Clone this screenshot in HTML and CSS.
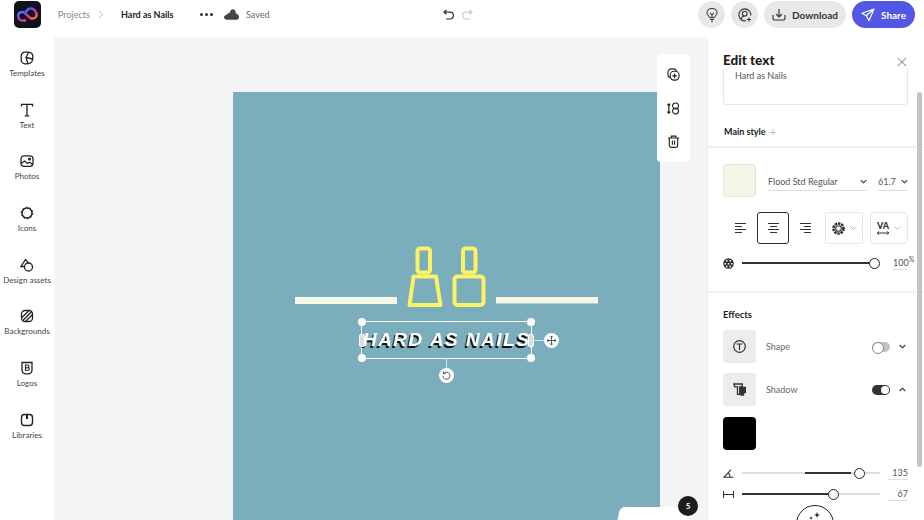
FILE: index.html
```html
<!DOCTYPE html>
<html lang="en">
<head>
  <meta charset="UTF-8" />
  <title>Hard as Nails</title>
  <link rel="stylesheet" href="styles.css">
</head>
<body>

  <header class="topbar">
    <div class="logo">
      <svg width="21" height="17" viewBox="0 0 21 17" fill="none" stroke-width="2.500">
        <defs>
          <linearGradient id="swirl" x1="0" y1="0" x2="1" y2="1">
            <stop offset="0" stop-color="#35c8f0"/>
            <stop offset="0.35" stop-color="#6a4cf0"/>
            <stop offset="0.65" stop-color="#ee2f8c"/>
            <stop offset="1" stop-color="#f9a51f"/>
          </linearGradient>
        </defs>
        <path stroke="url(#swirl)" d="M9 14.500H5.500a4.300 4.300 0 0 1-.2-8.600C8.500 5.800 11.500 12.300 15 12.600c4 .3 5.200-3.300 4.200-5.800C18 3 14 1.300 11 3.500 9.500 4.700 9 5.500 8.300 6.500"/>
      </svg>
    </div>
    <nav class="crumbs">
      <span class="crumb-link">Projects</span>
      <svg class="crumb-sep" width="6" height="9" viewBox="0 0 6 9" fill="none" stroke="#bbb"><path d="M1 .8l3.600 3.700L1 8.200"/></svg>
      <b class="crumb-title">Hard as Nails</b>
    </nav>
    <div class="dots"><i></i><i></i><i></i></div>
    <svg class="cloud" width="15" height="11" viewBox="0 0 16 11" fill="#444"><path d="M3.500 11C1.500 11 0 10 0 8.500 0 7 1 6 2.600 5.900 3 4.500 4.500 3.800 5.800 4.200 6.500 1.700 8 0 9.500 0c1.800 0 3 1.500 3.200 4.400C14.800 4.800 16 6.500 16 8.200c0 1.600-1 2.800-2.700 2.800z"/></svg>
    <span class="saved">Saved</span>
    <div class="history">
      <svg width="12" height="11" viewBox="0 0 12 11" fill="none" stroke="#333" stroke-width="1.200"><path d="M3.500 1L1 3.200l2.500 2.200M1 3.200h6a3.300 3.300 0 0 1 0 6.800H3"/></svg>
      <svg width="12" height="11" viewBox="0 0 12 11" fill="none" stroke="#ccc" stroke-width="1.200"><path d="M8.500 1L11 3.200 8.500 5.400M11 3.200H5a3.300 3.300 0 0 0 0 6.800h4"/></svg>
    </div>
    <div class="actions">
      <button class="round-btn">
        <svg width="12" height="14" viewBox="0 0 13 15" fill="none" stroke="#333" stroke-width="1.100"><path d="M4.300 10.500C4 8.800 1 7.800 1 5a5.500 4.500 0 0 1 11 0c0 2.800-3 3.800-3.300 5.500zM4.600 12.500h3.800M5.500 14.300h2M4.500 5l2 2.500 2-2.500M6.500 7.500v3"/></svg>
      </button>
      <button class="round-btn">
        <svg width="14" height="14" viewBox="0 0 14 14" fill="none" stroke="#333" stroke-width="1.100"><path d="M8 12.800A6 6 0 1 1 12.800 7.500M3 11c.6-2 2-3 3.700-3M6.700 3.300a2.300 2.300 0 1 1 0 4.700 2.300 2.300 0 0 1 0-4.700zM11 9.500v4M9 11.500h4"/></svg>
      </button>
      <button class="pill-btn">
        <svg width="14" height="13" viewBox="0 0 14 13" fill="none" stroke="#333" stroke-width="1.200"><path d="M7 1v7.500M4 6l3 3 3-3M1 7v3.500a1.500 1.500 0 0 0 1.500 1.500h9a1.500 1.500 0 0 0 1.500-1.500V7"/></svg>
        Download
      </button>
      <button class="pill-btn share-btn">
        <svg width="14" height="14" viewBox="0 0 14 14" fill="none" stroke="#fff" stroke-width="1.200" stroke-linejoin="round"><path d="M13 1L1 5.300l4.300 2.400L8 12.500zM13 1L5.300 7.700"/></svg>
        Share
      </button>
    </div>
  </header>

  <div class="main">
    <aside class="sidebar">
      <a class="tool">
        <svg width="14" height="14" viewBox="0 0 14 14" fill="none" stroke="#222" stroke-width="1.300"><path d="M5 1.200h3.500a4.500 4.500 0 0 1 4.300 4.300v2a5.500 5.500 0 0 1-5.300 5.300h-2A3.800 3.800 0 0 1 1.200 9V5A3.800 3.800 0 0 1 5 1.200zM8.500 1.500L6 6.500l6.500 1.500M6 6.500L8 13"/></svg>
        <span>Templates</span>
      </a>
      <a class="tool">
        <svg width="14" height="14" viewBox="0 0 14 14" fill="none" stroke="#222" stroke-width="1.300"><path d="M1.500 3.500V1.300h11v2.200M7 1.300v11.500M4.800 12.800h4.400"/></svg>
        <span>Text</span>
      </a>
      <a class="tool">
        <svg width="14" height="14" viewBox="0 0 14 14" fill="none" stroke="#222" stroke-width="1.300"><rect x="1" y="1.800" width="12" height="10.500" rx="3"/><path d="M1.200 9.500L4.500 7l3 2.500 2-1.300 3.300 2.300"/><circle cx="9.500" cy="5" r=".9"/></svg>
        <span>Photos</span>
      </a>
      <a class="tool">
        <svg width="14" height="14" viewBox="0 0 14 14" fill="none" stroke="#222" stroke-width="1.500"><circle cx="7" cy="7" r="5"/><circle cx="7" cy="7" r="5.800" stroke-width="1" stroke-dasharray="1.800 1.800"/></svg>
        <span>Icons</span>
      </a>
      <a class="tool">
        <svg width="14" height="14" viewBox="0 0 14 14" fill="none" stroke="#222" stroke-width="1.300"><path d="M4.500 8.500H1L5.500 1.500 8.500 5.200"/><circle cx="8.500" cy="9" r="4"/></svg>
        <span>Design assets</span>
      </a>
      <a class="tool">
        <svg width="14" height="14" viewBox="0 0 14 14" fill="none" stroke="#222" stroke-width="1.300"><rect x="1.500" y="1.500" width="11" height="11" rx="3.500"/><path d="M2 8.500L8.500 2M2.800 11.500L11.500 2.800M5.500 12.500l7-7"/></svg>
        <span>Backgrounds</span>
      </a>
      <a class="tool">
        <svg width="14" height="14" viewBox="0 0 14 14" fill="none" stroke="#222" stroke-width="1.300"><path d="M2 1.500h10v7.500a4 4 0 0 1-4 3.800H6A4 4 0 0 1 2 9z"/><path stroke-width="1.100" d="M5.500 4h2.200a1.300 1.300 0 0 1 0 2.700H5.500zM5.500 6.700h2.500a1.300 1.300 0 0 1 0 2.600H5.500z"/></svg>
        <span>Logos</span>
      </a>
      <a class="tool">
        <svg width="14" height="14" viewBox="0 0 14 14" fill="none" stroke="#222" stroke-width="1.400"><rect x="1.500" y="1.500" width="11" height="11" rx="3"/><path stroke-width="2" d="M7 2v4"/></svg>
        <span>Libraries</span>
      </a>
    </aside>

    <section class="workspace">
      <div class="artboard">
        <svg class="motif" width="427" height="428" viewBox="0 0 427 428" fill="none">
          <rect x="62" y="205" width="102" height="7" fill="#f4f6e6"/>
          <rect x="263" y="205" width="102" height="6.500" fill="#f4f6e6"/>
          <g stroke="#fdf164" stroke-width="4" stroke-linejoin="round">
            <rect x="184.500" y="156.500" width="12.500" height="24" rx="2.500"/>
            <path d="M180.500 184.500h22.500l4.500 28.500h-31z"/>
            <rect x="230" y="156.500" width="12.500" height="24" rx="2.500"/>
            <rect x="221.500" y="184.500" width="29" height="28.500" rx="3"/>
          </g>
        </svg>
        <div class="selection">
          <span class="title-text">HARD AS NAILS</span>
          <i class="corner tl"></i><i class="corner tr"></i><i class="corner bl"></i><i class="corner br"></i>
          <i class="side sl"></i><i class="side sr"></i>
          <i class="stem-h"></i><i class="stem-v"></i>
          <span class="knob move">
            <svg width="9" height="9" viewBox="0 0 9 9" fill="none" stroke="#555"><path d="M4.500 0v9M0 4.500h9M3 1.500L4.500 0 6 1.500M3 7.500L4.500 9 6 7.500M1.500 3L0 4.500 1.500 6M7.500 3L9 4.500 7.500 6"/></svg>
          </span>
          <span class="knob rotate">
            <svg width="9" height="9" viewBox="0 0 9 9" fill="none" stroke="#555"><path d="M1.800 2.500A3.500 3.500 0 1 1 1 4.800M1.500 .5v2.200h2.200"/></svg>
          </span>
        </div>
      </div>

      <div class="float-tools">
        <svg width="13" height="13" viewBox="0 0 14 14" fill="none" stroke="#222" stroke-width="1.200"><path d="M3 10.500A4 4 0 0 1 1 7V4.500A3.500 3.500 0 0 1 4.500 1H7a4 4 0 0 1 3.500 2"/><rect x="3.500" y="3.500" width="9.500" height="9.500" rx="4"/><path d="M8.200 6v5M5.800 8.500h5"/></svg>
        <svg width="13" height="13" viewBox="0 0 14 14" fill="none" stroke="#222" stroke-width="1.200"><circle cx="9.200" cy="4.300" r="3.200"/><circle cx="9.200" cy="9.800" r="3.200"/><path d="M2 2v10M.5 3.500L2 2l1.500 1.500M.5 10.500L2 12l1.500-1.500" stroke-width="1.300"/></svg>
        <svg width="13" height="13" viewBox="0 0 14 14" fill="none" stroke="#222" stroke-width="1.200"><path d="M1 3.300h12M4.500 3V1.200h5V3M2.500 3.300v8a2 2 0 0 0 2 2h5a2 2 0 0 0 2-2v-8M5.800 6v4.500M8.200 6v4.500"/></svg>
      </div>

      <div class="bottom-tab"></div>
      <span class="page-badge">5</span>
    </section>

    <aside class="panel">
      <div class="scroll-thumb"></div>
      <div class="panel-head">
        <h2>Edit text</h2>
        <svg width="10" height="10" viewBox="0 0 10 10" stroke="#999" stroke-width="1.100"><path d="M.8.800l8.400 8.400M9.200.800L.8 9.200"/></svg>
      </div>
      <div class="text-box">Hard as Nails</div>
      <div class="style-head"><b>Main style</b><span class="plus">+</span></div>

      <div class="section style-section">
        <div class="font-row">
          <span class="swatch cream"></span>
          <div class="select font-select">Flood Std Regular
            <svg class="chev" width="7" height="5" viewBox="0 0 8 5" fill="none" stroke="#333" stroke-width="1.200"><path d="M.8.800L4 4 7.200.800"/></svg>
          </div>
          <div class="select size-select">61.7
            <svg class="chev" width="7" height="5" viewBox="0 0 8 5" fill="none" stroke="#333" stroke-width="1.200"><path d="M.8.800L4 4 7.200.800"/></svg>
          </div>
        </div>
        <div class="align-row">
          <span class="align-btn first"><svg width="11" height="10" viewBox="0 0 11 10" stroke="#333"><path d="M0 .5h11M0 3.500h7M0 6.500h11M0 9.500h7"/></svg></span>
          <span class="align-btn active"><svg width="11" height="10" viewBox="0 0 11 10" stroke="#333"><path d="M0 .5h11M2 3.500h7M0 6.500h11M2 9.500h7"/></svg></span>
          <span class="align-btn"><svg width="11" height="10" viewBox="0 0 11 10" stroke="#333"><path d="M0 .5h11M4 3.500h7M0 6.500h11M4 9.500h7"/></svg></span>
          <span class="drop-btn wide">
            <svg width="13" height="13" viewBox="0 0 13 13" fill="none" stroke="#333" stroke-width="1.100"><circle cx="6.500" cy="6.500" r="2.800"/><circle cx="6.500" cy="6.500" r="5" stroke-width="2.600" stroke-dasharray="2.400 .8"/></svg>
            <svg width="7" height="4" viewBox="0 0 7 4" fill="none" stroke="#bbb"><path d="M.5.500l3 3 3-3"/></svg>
          </span>
          <span class="drop-btn">
            <span class="va">VA
              <svg width="12" height="4" viewBox="0 0 12 4" fill="none" stroke="#333"><path d="M0 2h12M2 .3L.3 2 2 3.700M10 .3L11.700 2 10 3.700"/></svg>
            </span>
            <svg width="7" height="4" viewBox="0 0 7 4" fill="none" stroke="#bbb"><path d="M.5.500l3 3 3-3"/></svg>
          </span>
        </div>
        <div class="slider-row opacity-row">
          <svg width="11" height="11" viewBox="0 0 11 11"><circle cx="5.500" cy="5.500" r="5.300" fill="#333"/><path d="M3 2h1.500v1.500H3zM6.500 2H8v1.500H6.500zM1.500 5H3v1.500H1.500zM4.800 5h1.500v1.500H4.800zM8 5h1.500v1.500H8zM3 7.800h1.500v1.500H3zM6.500 7.800H8v1.500H6.500z" fill="#fff"/></svg>
          <div class="slider"><i class="fill" style="left:0;width:100%"></i><i class="thumb" style="left:100%"></i></div>
          <span class="value pct">100<sup>%</sup></span>
        </div>
      </div>

      <div class="section effects">
        <b class="effects-title">Effects</b>
        <div class="effect-row">
          <span class="tile"><svg width="13" height="13" viewBox="0 0 13 13" fill="none" stroke="#333" stroke-width="1.200"><circle cx="6.500" cy="6.500" r="5.800"/><path d="M3.500 4h6M6.500 4v6"/></svg></span>
          <span class="effect-name">Shape</span>
          <span class="toggle"></span>
          <svg class="chev" width="7" height="5" viewBox="0 0 8 5" fill="none" stroke="#333" stroke-width="1.300"><path d="M.8.800L4 4 7.200.800"/></svg>
        </div>
        <div class="effect-row">
          <span class="tile"><svg width="13" height="13" viewBox="0 0 13 13" fill="none" stroke="#333" stroke-width="1.300"><path d="M.8 1h8.500v2.800H6.800v7.500H4.500V3.800L1.800 3.800z"/><path fill="#333" d="M7 4.500h5.500v5H10.500V12H8z"/></svg></span>
          <span class="effect-name">Shadow</span>
          <span class="toggle on"></span>
          <svg class="chev" width="7" height="5" viewBox="0 0 8 5" fill="none" stroke="#333" stroke-width="1.300"><path d="M.8 4.200L4 1l3.200 3.200"/></svg>
        </div>
        <span class="swatch black"></span>
        <div class="slider-row angle-row">
          <svg width="11" height="10" viewBox="0 0 11 10" fill="none" stroke="#333" stroke-width="1.100"><path d="M10.500 9.300H1L8 1.500M5.500 5c1 1 1.500 2.500 1.500 4"/></svg>
          <div class="slider"><i class="fill" style="left:46%;width:33%"></i><i class="thumb" style="left:85%"></i></div>
          <span class="value">135</span>
        </div>
        <div class="slider-row">
          <svg width="11" height="7" viewBox="0 0 11 7" fill="none" stroke="#333" stroke-width="1.100"><path d="M.5 0v7M10.500 0v7M.5 3.500h10"/></svg>
          <div class="slider"><i class="fill" style="left:0;width:62%"></i><i class="thumb" style="left:66%"></i></div>
          <span class="value">67</span>
        </div>
      </div>
      <span class="assist">
        <svg width="14" height="8" viewBox="0 0 14 8" fill="#222"><path d="M9 0l.8 2.200L12 3l-2.200.8L9 6l-.8-2.200L6 3l2.200-.8zM3 4l.5 1.500L5 6l-1.500.5L3 8l-.5-1.500L1 6l1.500-.5z"/></svg>
      </span>
    </aside>
  </div>

</body>
</html>
```

FILE: styles.css
```css
* {
  box-sizing: border-box;
}

body {
  margin: 0;
  width: 924px;
  height: 520px;
  overflow: hidden;
  background: #fff;
  color: #333;
  font-family: Lato, "Open Sans", sans-serif;
  font-size: 9px;
}

/* top bar */
.topbar {
  height: 37px;
  display: flex;
  align-items: center;
  background: #fff;
  padding: 0 0 8px 14px;
}

.logo {
  width: 27px;
  height: 27px;
  border-radius: 5px;
  background: #10131a;
  display: flex;
  align-items: center;
  justify-content: center;
}

.crumbs {
  display: flex;
  align-items: center;
  margin-left: 17px;
}

.crumb-link {
  width: 40px;
  color: #888;
}

.crumb-sep {
  margin: 0 17px 0 0;
}

.crumb-title {
  width: 53px;
  color: #222;
  font-weight: 700;
  white-space: nowrap;
}

.dots {
  display: flex;
  gap: 2px;
  margin-left: 26px;
}

.dots i {
  width: 3px;
  height: 3px;
  border-radius: 50%;
  background: #333;
}

.cloud {
  margin-left: 11px;
}

.saved {
  margin-left: 7px;
  color: #666;
}

.history {
  display: flex;
  gap: 6px;
  margin-left: 173px;
}

.actions {
  display: flex;
  align-items: center;
  gap: 6px;
  margin-left: auto;
  padding-right: 9px;
}

.round-btn,
.pill-btn {
  height: 27px;
  border: none;
  border-radius: 14px;
  background: #e8e8e8;
  color: #333;
  font: 700 10px Lato, sans-serif;
  display: flex;
  align-items: center;
  justify-content: center;
  padding: 0;
}

.round-btn {
  width: 27px;
}

.pill-btn {
  width: 82px;
  gap: 6px;
}

.share-btn {
  width: 63px;
  background: #5258e4;
  color: #fff;
}

/* main area */
.main {
  display: flex;
  height: 483px;
}

.sidebar {
  width: 54px;
  flex: none;
  background: #fff;
  padding-top: 14px;
}

.tool {
  height: 51.700px;
  display: flex;
  flex-direction: column;
  align-items: center;
  gap: 3px;
  font-size: 8px;
  color: #444;
  white-space: nowrap;
}

.workspace {
  flex: 1;
  position: relative;
  background: #f5f5f5;
  padding: 55px 0 0 179px;
  overflow: hidden;
}

.artboard {
  position: relative;
  width: 427px;
  height: 428px;
  background: #7aaebd;
}

.motif {
  position: absolute;
  left: 0;
  top: 0;
}

.selection {
  position: absolute;
  left: 128px;
  top: 229px;
  width: 171px;
  height: 38px;
  border: 1px solid #fff;
}

.title-text {
  position: absolute;
  left: 0;
  right: 0;
  top: 8px;
  text-align: center;
  color: #fff;
  font: italic bold 19px/20px "Liberation Sans", sans-serif;
  letter-spacing: 1.500px;
  white-space: nowrap;
  text-shadow: -1.500px 1.500px 0 #111;
}

.corner {
  position: absolute;
  width: 8px;
  height: 8px;
  border-radius: 50%;
  background: #fff;
}

.tl { left: -4px; top: -4px; }
.tr { right: -4px; top: -4px; }
.bl { left: -4px; bottom: -4px; }
.br { right: -4px; bottom: -4px; }

.side {
  position: absolute;
  top: 12px;
  width: 6px;
  height: 13px;
  border-radius: 2px;
  background: #d5dfe0;
  border: 1px solid #fff;
}

.sl { left: -3px; }
.sr { right: -3px; }

.stem-h {
  position: absolute;
  left: 169px;
  top: 18px;
  width: 14px;
  height: 1px;
  background: #d5e3e7;
}

.stem-v {
  position: absolute;
  left: 84px;
  top: 37px;
  width: 1px;
  height: 10px;
  background: #d5e3e7;
}

.knob {
  position: absolute;
  width: 15px;
  height: 15px;
  border-radius: 50%;
  background: #fff;
  display: flex;
  align-items: center;
  justify-content: center;
}

.move {
  left: 182px;
  top: 11px;
}

.rotate {
  left: 77px;
  top: 46px;
}

.float-tools {
  position: absolute;
  left: 603px;
  top: 17px;
  width: 33px;
  height: 108px;
  background: #fff;
  border-radius: 4px;
  display: flex;
  flex-direction: column;
  align-items: center;
  justify-content: space-between;
  padding: 14px 0;
}

.bottom-tab {
  position: absolute;
  left: 564px;
  top: 470px;
  width: 72px;
  height: 20px;
  background: #fff;
  border-radius: 5px 5px 0 0;
  transform: skewX(-12deg);
}

.page-badge {
  position: absolute;
  left: 624px;
  top: 459px;
  width: 20px;
  height: 20px;
  border-radius: 50%;
  background: #1d1d1d;
  color: #fff;
  font-size: 8px;
  font-weight: 700;
  display: flex;
  align-items: center;
  justify-content: center;
}

/* right panel */
.panel {
  width: 217px;
  flex: none;
  position: relative;
  overflow: hidden;
  background: #fff;
  border-left: 1px solid #f0f0f0;
}

.scroll-thumb {
  position: absolute;
  right: 2px;
  top: 55px;
  width: 5px;
  height: 375px;
  border-radius: 3px;
  background: #c4c4c4;
}

.panel-head {
  height: 32px;
  padding: 15px 17px 0 15px;
  display: flex;
  justify-content: space-between;
  align-items: flex-start;
}

.panel-head svg {
  margin-top: 5px;
}

.panel-head h2 {
  margin: 0;
  font-size: 13.500px;
  line-height: 16px;
  font-weight: 900;
  color: #1b1b1b;
}

.text-box {
  width: 185px;
  height: 37px;
  margin-left: 15px;
  margin-top: -1px;
  padding: 1px 11px;
  border: 1px solid #e6e6e6;
  border-top: none;
  border-radius: 0 0 4px 4px;
  line-height: 14px;
  color: #555;
}

.style-head {
  height: 43px;
  padding: 20px 0 0 16px;
  display: flex;
  gap: 4px;
  line-height: 14px;
  color: #222;
  border-bottom: 2px solid #f0f0f0;
}

.plus {
  color: #bbb;
  font-size: 12px;
}

.section {
  padding: 0 15px;
}

.style-section {
  height: 145px;
  padding-top: 16px;
  border-bottom: 2px solid #f0f0f0;
}

.font-row {
  display: flex;
  align-items: flex-start;
}

.swatch {
  display: block;
  width: 33px;
  height: 33px;
  border-radius: 4px;
}

.cream {
  background: #f3f5e6;
  border: 1px solid #e3e3d8;
}

.black {
  background: #000;
  margin-top: 11px;
}

.select {
  height: 27px;
  padding-top: 9px;
  line-height: 14px;
  border-bottom: 1px solid #ddd;
  color: #555;
  display: flex;
  justify-content: space-between;
  align-items: center;
}

.font-select {
  width: 99px;
  margin-left: 12px;
}

.size-select {
  width: 30px;
  margin-left: 11px;
}

.chev {
  flex: none;
}

.align-row {
  display: flex;
  align-items: center;
  margin-top: 15px;
  height: 32px;
}

.align-btn {
  width: 33px;
  height: 32px;
  display: flex;
  align-items: center;
  justify-content: center;
  border-radius: 3px;
}

.align-btn.first {
  width: 34px;
}

.align-btn.active {
  width: 32px;
  border: 1.500px solid #2c2c2c;
}

.drop-btn {
  width: 38px;
  height: 32px;
  border: 1.500px solid #e6e6e6;
  border-radius: 4px;
  display: flex;
  align-items: center;
  justify-content: center;
  gap: 5px;
}

.drop-btn.wide {
  margin-left: 3px;
  margin-right: 7px;
}

.va {
  display: flex;
  flex-direction: column;
  align-items: center;
  font-size: 9px;
  font-weight: 900;
  line-height: 10px;
}

.slider-row {
  display: flex;
  align-items: center;
  gap: 8px;
  height: 14px;
}

.opacity-row {
  margin-top: 12px;
}

.slider {
  position: relative;
  width: 138px;
  height: 2px;
  background: #ddd;
}

.opacity-row .slider {
  width: 132px;
}

.fill {
  position: absolute;
  top: 0;
  height: 2px;
  background: #333;
}

.thumb {
  position: absolute;
  top: -4.500px;
  width: 11px;
  height: 11px;
  margin-left: -5.500px;
  border: 1.500px solid #222;
  border-radius: 50%;
  background: #fff;
}

.value {
  width: 20px;
  text-align: right;
  line-height: 12px;
  color: #555;
  border-bottom: 1px solid #ddd;
}

.pct {
  margin-left: 11px;
  width: 14px;
  white-space: nowrap;
}

.pct sup {
  font-size: 7px;
  line-height: 0;
}

.effects-title {
  display: block;
  padding-top: 15px;
  line-height: 14px;
  font-size: 9.500px;
  font-weight: 700;
  color: #222;
}

.effect-row {
  display: flex;
  align-items: center;
  height: 33px;
  margin-top: 8px;
  padding-right: 3px;
}

.effect-row:nth-of-type(2) {
  margin-top: 10px;
}

.tile {
  width: 33px;
  height: 33px;
  border-radius: 3px;
  background: #ececec;
  display: flex;
  align-items: center;
  justify-content: center;
}

.effect-name {
  margin-left: 10px;
  flex: 1;
  color: #666;
}

.toggle {
  position: relative;
  width: 18px;
  height: 10px;
  margin-right: 9px;
  border-radius: 5px;
  background: #c4c4c4;
}

.toggle::after {
  content: "";
  position: absolute;
  left: 0;
  top: 0;
  width: 10px;
  height: 10px;
  border-radius: 50%;
  border: 1px solid #888;
  background: #fff;
}

.toggle.on {
  background: #333;
}

.toggle.on::after {
  left: 9px;
  top: 1px;
  width: 8px;
  height: 8px;
  border: none;
}

.angle-row {
  margin-top: 16px;
}

.angle-row + .slider-row {
  margin-top: 7px;
}

.assist {
  position: absolute;
  left: 88px;
  top: 468px;
  width: 38px;
  height: 38px;
  border: 1.500px solid #222;
  border-radius: 50%;
  background: #fff;
  display: flex;
  justify-content: center;
  padding-top: 6px;
}
```
